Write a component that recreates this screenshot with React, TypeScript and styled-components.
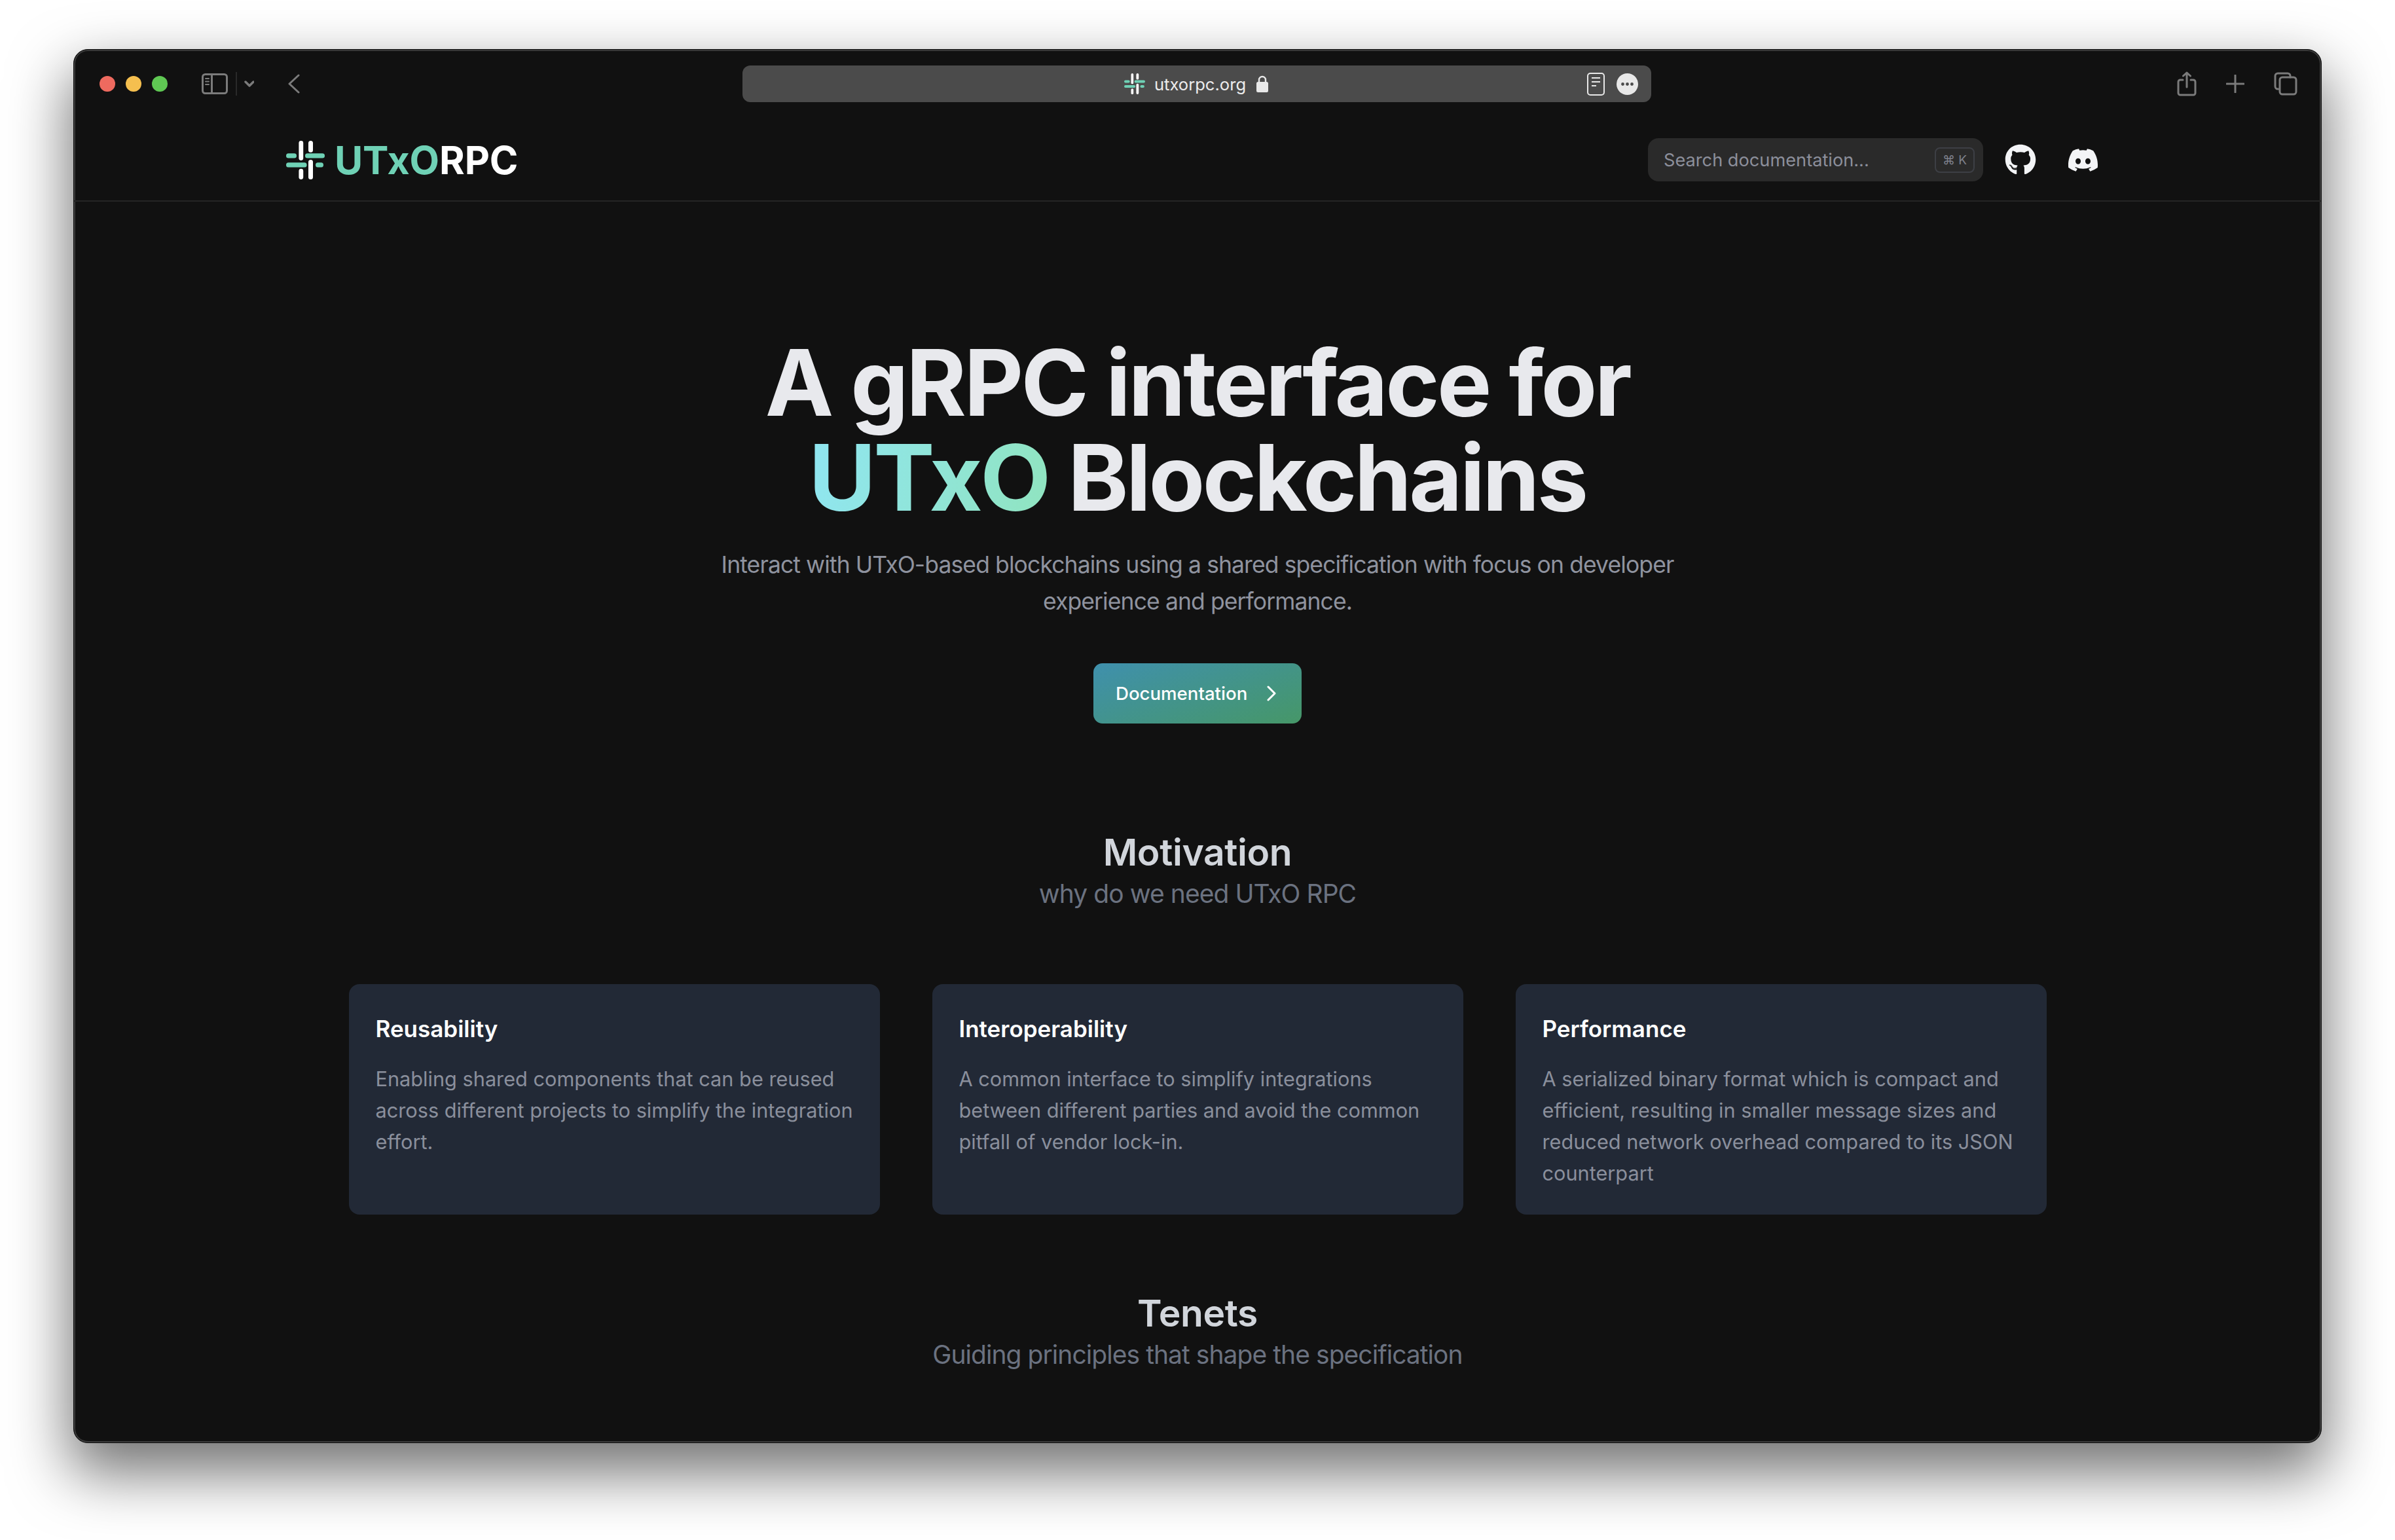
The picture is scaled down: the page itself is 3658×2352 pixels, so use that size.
import React from "react";
import styled, { createGlobalStyle } from "styled-components";
import { FaGithub, FaDiscord } from "react-icons/fa";

const Global = createGlobalStyle`
  html, body { margin: 0; padding: 0; background: #fff; }
  body { width: 3658px; height: 2352px; overflow: hidden; font-family: Inter, "Liberation Sans", sans-serif; }
  * { box-sizing: border-box; }
`;

const Page = styled.div`
  width: 3658px;
  height: 2352px;
  padding: 75px 112px 148px;
  background: #fff;
`;

const Window = styled.div`
  height: 2129px;
  background: #111111;
  border-radius: 22px;
  border: 1px solid #0b0b0b;
  box-shadow: inset 0 0 0 2px #3a3a3a, 0 40px 90px 6px rgba(0, 0, 0, 0.55);
  overflow: hidden;
  display: flex;
  flex-direction: column;
`;

const TitleBar = styled.div`
  display: grid;
  grid-template-columns: 1fr 1388px 1fr;
  align-items: center;
  height: 56px;
  margin-top: 24px;
  padding: 0 40px 0 37px;
`;

const ToolLeft = styled.div`
  display: flex;
  align-items: center;
  padding-left: 2px;
`;

const Light = styled.span<{ $c: string }>`
  width: 24px;
  height: 24px;
  border-radius: 50%;
  background: ${(p) => p.$c};
  margin-right: 16px;
`;

const ToolRight = styled.div`
  display: flex;
  justify-content: flex-end;
  align-items: center;
  gap: 45px;
  margin-right: -4px;
`;

const Glyph = styled.svg`
  display: block;
  flex: none;
  fill: none;
  stroke: #7b7b7b;
  stroke-width: 3;
  stroke-linecap: round;
  stroke-linejoin: round;
`;

const SidebarGlyph = styled(Glyph)`
  margin-left: 36px;
`;

const ChevronGlyph = styled(Glyph)`
  margin-left: 12px;
`;

const BackGlyph = styled(Glyph)`
  margin-left: 52px;
`;

const AddressBar = styled.div`
  height: 56px;
  border-radius: 12px;
  background: #4b4b4b;
  display: grid;
  grid-template-columns: 1fr auto 1fr;
  align-items: center;
  padding: 0 20px;
`;

const UrlGroup = styled.div`
  grid-column: 2;
  display: flex;
  align-items: center;
`;

const UrlText = styled.span`
  margin-left: 14px;
  margin-right: 15px;
  font-size: 25.6px;
  color: #ececec;
`;

const AddressActions = styled.div`
  display: flex;
  justify-content: flex-end;
  align-items: center;
  gap: 18px;
`;

const Nav = styled.nav`
  display: flex;
  align-items: center;
  justify-content: space-between;
  height: 152px;
  padding: 55px 339px 29px 324px;
  border-bottom: 2px solid #252525;
`;

const Logo = styled.div`
  display: flex;
  align-items: center;
  gap: 15px;
`;

const LogoText = styled.div`
  font-size: 59px;
  font-weight: 700;
  letter-spacing: -0.1px;
  line-height: 1;
  color: #fff;
`;

const LogoAccent = styled.span`
  color: #6fd1b5;
`;

const NavRight = styled.div`
  display: flex;
  align-items: center;
`;

const Search = styled.div`
  width: 512px;
  height: 66px;
  border-radius: 16px;
  background: #2a2a2a;
  display: flex;
  align-items: center;
  justify-content: space-between;
  padding: 0 13px 0 24px;
  font-size: 27.2px;
  color: #8c8f9b;
`;

const Kbd = styled.span`
  width: 61px;
  height: 39px;
  border: 2px solid #3d3f45;
  border-radius: 8px;
  display: flex;
  align-items: center;
  justify-content: center;
  font-size: 19px;
  gap: 4px;
  color: #7d808b;
  font-family: Inter, "DejaVu Sans", sans-serif;
`;

const GithubIcon = styled(FaGithub)`
  margin-left: 33px;
  width: 48px;
  height: 48px;
  color: #f3f4f6;
`;

const DiscordIcon = styled(FaDiscord)`
  margin-left: 47px;
  width: 49px;
  height: 49px;
  color: #f3f4f6;
`;

const Main = styled.main`
  display: flex;
  flex-direction: column;
  align-items: center;
  text-align: center;
`;

const Headline = styled.h1`
  margin: 204px 0 0;
  font-size: 140px;
  line-height: 145px;
  font-weight: 700;
  letter-spacing: -3.6px;
  color: #e8e9ed;
`;

const Gradient = styled.span`
  background: linear-gradient(100deg, #90e6f2, #90e4bf);
  -webkit-background-clip: text;
  background-clip: text;
  color: transparent;
`;

const Lead = styled.p`
  margin: 33px 0 0;
  width: 1500px;
  font-size: 35.5px;
  letter-spacing: -0.9px;
  line-height: 56px;
  color: #8f939f;
`;

const DocButton = styled.a`
  margin-top: 66px;
  width: 318px;
  height: 92px;
  border-radius: 14px;
  background: linear-gradient(160deg, #3f90ad, #469768);
  display: flex;
  align-items: center;
  padding-left: 34px;
  font-size: 27.6px;
  font-weight: 500;
  color: #fff;
`;

const ArrowGlyph = styled(Glyph)`
  margin-left: 30px;
  stroke: #fff;
`;

const SectionTitle = styled.h2<{ $top: number }>`
  margin: ${(p) => p.$top}px 0 0;
  font-size: 57px;
  letter-spacing: -0.4px;
  line-height: 70px;
  font-weight: 600;
  color: #d1d5db;
`;

const SectionSub = styled.p`
  margin: 0;
  font-size: 39px;
  letter-spacing: -0.95px;
  line-height: 56px;
  color: #6b7280;
`;

const Cards = styled.div`
  margin-top: 110px;
  display: grid;
  grid-template-columns: repeat(3, 811px);
  gap: 80px;
`;

const Card = styled.div`
  height: 352px;
  padding: 44px 40px 0 41px;
  border-radius: 16px;
  background: #222936;
  text-align: left;
`;

const CardTitle = styled.h3`
  margin: 0;
  font-size: 35px;
  line-height: 48px;
  font-weight: 600;
  color: #fff;
`;

const CardBody = styled.p`
  margin: 29px 0 0;
  font-size: 30.7px;
  line-height: 48px;
  color: #8a8f9c;
`;

const Mark: React.FC<{ size: number }> = ({ size }) => (
  <svg width={size} height={size} viewBox="0 0 59 59" style={{ display: "block", flex: "none" }}>
    <g fill="#fff">
      <rect x="19.4" y="0" width="6.8" height="30" rx="3.4" />
      <rect x="19.4" y="42.7" width="6.8" height="16.3" rx="3.4" />
      <rect x="34" y="0" width="7" height="17.7" rx="3.5" />
      <rect x="34" y="29" width="7" height="30" rx="3.5" />
    </g>
    <g fill="#6fd1b5">
      <rect x="0" y="19.3" width="16" height="7.3" rx="3.6" />
      <rect x="29" y="19.3" width="30" height="7.3" rx="3.6" />
      <rect x="0" y="33.3" width="31.6" height="7.3" rx="3.6" />
      <rect x="45" y="33.3" width="12" height="7.3" rx="3.6" />
    </g>
  </svg>
);

const cards = [
  { t: "Reusability", b: "Enabling shared components that can be reused across different projects to simplify the integration effort." },
  { t: "Interoperability", b: "A common interface to simplify integrations between different parties and avoid the common pitfall of vendor lock-in." },
  { t: "Performance", b: "A serialized binary format which is compact and efficient, resulting in smaller message sizes and reduced network overhead compared to its JSON counterpart" },
];

export default function App() {
  return (
    <Page>
      <Global />
      <Window>
        <TitleBar>
          <ToolLeft>
            <Light $c="#ee6a5f" />
            <Light $c="#f5bf4f" />
            <Light $c="#5fc853" />
            <SidebarGlyph width="40" height="32" viewBox="0 0 40 32">
              <rect x="1.5" y="1.5" width="37" height="29" rx="4" />
              <path d="M15.5 1.5v29" />
              <path d="M6 8h5M6 12.5h5M6 17h5" strokeWidth="2" />
            </SidebarGlyph>
            <ChevronGlyph width="28" height="36" viewBox="0 0 28 36">
              <path d="M1 0v36" stroke="#2a2a2a" strokeWidth="2" />
              <path d="M15 15l6 6 6-6" strokeWidth="3.5" />
            </ChevronGlyph>
            <BackGlyph width="18" height="30" viewBox="0 0 18 30">
              <path d="M16 2L2 15l14 13" />
            </BackGlyph>
          </ToolLeft>
          <AddressBar>
            <UrlGroup>
              <Mark size={32} />
              <UrlText>utxorpc.org</UrlText>
              <svg width="20" height="28" viewBox="0 0 20 28" style={{ display: "block" }}>
                <path d="M5 12V8a5 5 0 0 1 10 0v4" fill="none" stroke="#e8e8e8" strokeWidth="2.4" />
                <rect x="1" y="11" width="18" height="16" rx="2.5" fill="#e8e8e8" />
              </svg>
            </UrlGroup>
            <AddressActions>
              <svg width="27" height="35" viewBox="0 0 27 35" style={{ display: "block" }}>
                <rect x="1" y="1" width="25" height="33" rx="4" fill="none" stroke="#e8e8e8" strokeWidth="2" />
                <path d="M7 8h13M7 14h13M7 20h7" stroke="#e8e8e8" strokeWidth="2" />
              </svg>
              <svg width="33" height="33" viewBox="0 0 33 33" style={{ display: "block" }}>
                <circle cx="16.5" cy="16.5" r="16.5" fill="#e8e8e8" />
                <circle cx="9.5" cy="16.5" r="2.4" fill="#4b4b4b" />
                <circle cx="16.5" cy="16.5" r="2.4" fill="#4b4b4b" />
                <circle cx="23.5" cy="16.5" r="2.4" fill="#4b4b4b" />
              </svg>
            </AddressActions>
          </AddressBar>
          <ToolRight>
            <Glyph width="30" height="38" viewBox="0 0 30 38">
              <path d="M9 13H5a3 3 0 0 0-3 3v17a3 3 0 0 0 3 3h20a3 3 0 0 0 3-3V16a3 3 0 0 0-3-3h-4" />
              <path d="M15 24V2M9.5 7L15 2l5.500 5" />
            </Glyph>
            <Glyph width="28" height="28" viewBox="0 0 28 28">
              <path d="M14 1v26M1 14h26" />
            </Glyph>
            <Glyph width="36" height="36" viewBox="0 0 36 36">
              <path d="M7 26H6a4 4 0 0 1-4-4V6a4 4 0 0 1 4-4h15a4 4 0 0 1 4 4v2" />
              <rect x="9" y="8" width="25" height="26" rx="4" />
            </Glyph>
          </ToolRight>
        </TitleBar>
        <Nav>
          <Logo>
            <Mark size={59} />
            <LogoText>
              <LogoAccent>UTxO</LogoAccent>RPC
            </LogoText>
          </Logo>
          <NavRight>
            <Search>
              <span>Search documentation...</span>
              <Kbd>⌘ K</Kbd>
            </Search>
            <GithubIcon />
            <DiscordIcon />
          </NavRight>
        </Nav>
        <Main>
          <Headline>
            A gRPC interface for
            <br />
            <Gradient>UTxO</Gradient> Blockchains
          </Headline>
          <Lead>
            Interact with UTxO-based blockchains using a shared specification with focus on developer experience and performance.
          </Lead>
          <DocButton>
            Documentation
            <ArrowGlyph width="14" height="24" viewBox="0 0 14 24">
              <path d="M2 2l10 10L2 22" />
            </ArrowGlyph>
          </DocButton>
          <SectionTitle $top={162}>Motivation</SectionTitle>
          <SectionSub>why do we need UTxO RPC</SectionSub>
          <Cards>
            {cards.map((c) => (
              <Card key={c.t}>
                <CardTitle>{c.t}</CardTitle>
                <CardBody>{c.b}</CardBody>
              </Card>
            ))}
          </Cards>
          <SectionTitle $top={116}>Tenets</SectionTitle>
          <SectionSub>Guiding principles that shape the specification</SectionSub>
        </Main>
      </Window>
    </Page>
  );
}
